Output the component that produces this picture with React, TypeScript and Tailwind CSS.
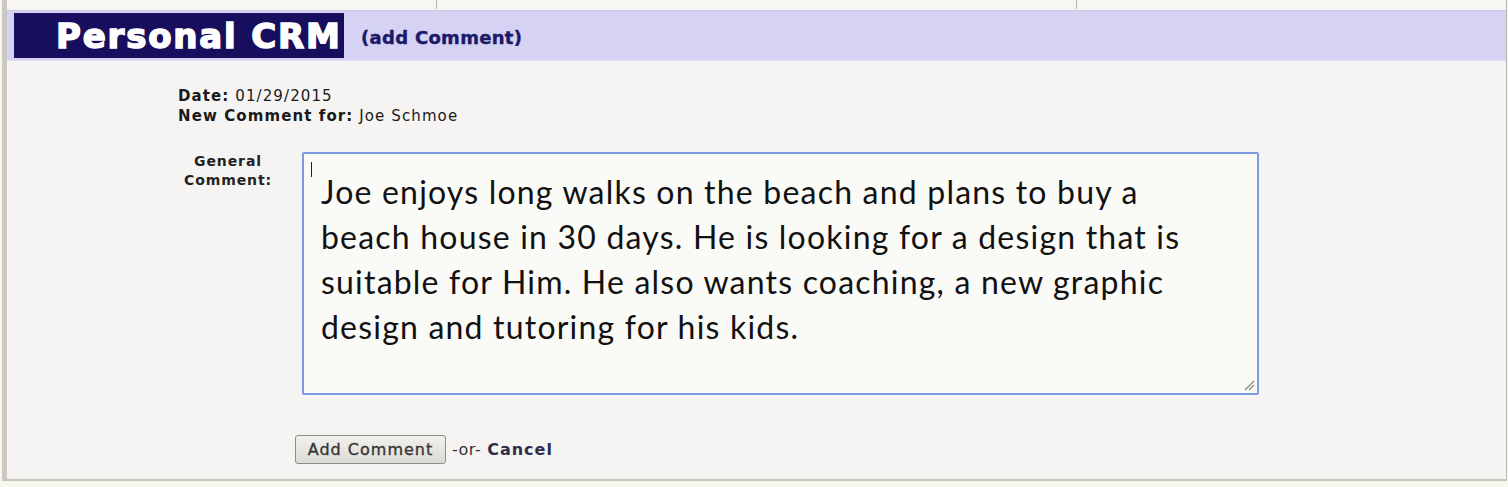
const sans = { fontFamily: '"DejaVu Sans", Verdana, sans-serif' };

function ResizeGrip() {
  return (
    <svg
      className="absolute right-[2px] bottom-[2px]"
      width="12"
      height="12"
      viewBox="0 0 12 12"
    >
      <line x1="2" y1="11" x2="11" y2="2" stroke="#8a8a80" strokeWidth="1.2" />
      <line x1="6" y1="11" x2="11" y2="6" stroke="#8a8a80" strokeWidth="1.2" />
    </svg>
  );
}

export default function App() {
  const lines = [
    "Joe enjoys long walks on the beach and plans to buy a",
    "beach house in 30 days. He is looking for a design that is",
    "suitable for Him. He also wants coaching, a new graphic",
    "design and tutoring for his kids.",
  ];

  return (
    <div className="h-[487px] w-[1508px] bg-[#f7f6ef] overflow-hidden" style={sans}>
      <div className="h-[481px] ml-[2px] mr-[1px] border-l-[5px] border-l-[#cbc8c2] border-r border-r-[#b9b6b1] border-b-2 border-b-[#c8c5bd] bg-[#f5f4f2] flex flex-col">
        {/* top strip */}
        <div className="h-[10px] bg-[#f7f6f2] flex">
          <div className="ml-[429px] w-px h-[9px] bg-[#b8b6b0]" />
          <div className="ml-[639px] w-px h-[9px] bg-[#b8b6b0]" />
        </div>

        {/* header */}
        <div className="h-[51px] bg-[#d6d2f3] border-t border-t-[#cdc9e6] border-b border-b-[#e2dff2] flex items-center">
          <div className="ml-[7px] h-[45px] w-[330px] bg-[#170f5d] flex items-center pl-[42px]">
            <span className="text-white font-bold text-[34px] leading-none tracking-[1.8px] [-webkit-text-stroke:1.5px_white]">
              Personal CRM
            </span>
          </div>
          <span className="ml-[17px] mt-[3px] text-[#1c1a68] font-bold text-[18px] tracking-[0.3px] [-webkit-text-stroke:0.4px_#1c1a68]">
            (add Comment)
          </span>
        </div>

        {/* content */}
        <div className="flex flex-col pt-[25px]">
          <div className="pl-[171px] text-[15px] leading-[20px] tracking-[1.1px] text-[#1a1a1a]">
            <div>
              <span className="font-bold">Date:</span> 01/29/2015
            </div>
            <div>
              <span className="font-bold">New Comment for:</span> Joe Schmoe
            </div>
          </div>

          <div className="flex mt-[26px] pl-[165px]">
            <div className="w-[112px] text-center font-bold text-[14px] leading-[19px] tracking-[0.9px] text-[#222]">
              General
              <br />
              Comment:
            </div>
            <div className="relative ml-[18px] w-[957px] h-[243px] border-2 border-[#7b9ae0] rounded-[2px] bg-[#fafaf7] pl-[17px] pt-[15px]">
              <div className="absolute left-[7px] top-[8px] w-px h-[15px] bg-[#222]" />
              <div
                className="text-[32px] leading-[45px] tracking-[1.2px] text-[#111]"
                style={{ fontFamily: 'Lato, "Open Sans", sans-serif' }}
              >
                {lines.map((l) => (
                  <div key={l} className="whitespace-nowrap">
                    {l}
                  </div>
                ))}
              </div>
              <ResizeGrip />
            </div>
          </div>

          <div className="flex items-center mt-[40px] pl-[288px]">
            <button className="h-[29px] w-[151px] border border-[#8f8c86] rounded-[3px] bg-gradient-to-b from-[#f2f1ee] to-[#dcdad4] text-[16px] tracking-[1px] text-[#333] [-webkit-text-stroke:0.3px_#333]">
              Add Comment
            </button>
            <span className="ml-[6px] text-[16px] tracking-[0.5px] text-[#333]">-or-</span>
            <span className="ml-[6px] text-[16px] font-bold tracking-[1px] text-[#2e2d4c]">
              Cancel
            </span>
          </div>
        </div>
      </div>
    </div>
  );
}
